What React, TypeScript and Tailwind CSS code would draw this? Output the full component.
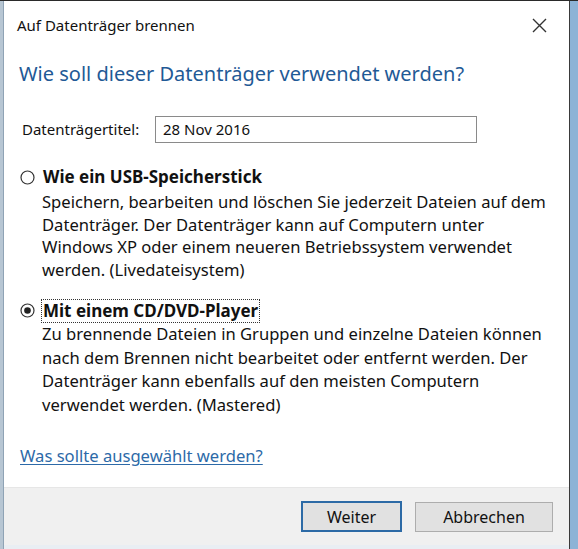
import React from "react";

const font = { fontFamily: '"Noto Sans", "Open Sans", sans-serif' };

function Radio({ checked }: { checked: boolean }) {
  return (
    <svg width="15" height="15" viewBox="0 0 15 15" className="shrink-0">
      <circle cx="7.5" cy="7.5" r="6.5" fill="white" stroke="#333" strokeWidth="1.2" />
      {checked && <circle cx="7.5" cy="7.5" r="3.3" fill="#222" />}
    </svg>
  );
}

export default function App() {
  return (
    <div className="w-[578px] h-[549px] bg-[#2a2a2a] overflow-hidden" style={font}>
      <div className="flex h-full pt-[1px]">
        <div className="w-[4px] bg-[#b7c6d3] border-r border-[#8fa3b5]" />
        <div className="w-[565px] flex flex-col bg-white">
          {/* title bar */}
          <div className="h-[48px] flex items-center justify-between pl-[13px] pr-[22px] text-[15px] text-[#111]">
            <span>Auf Datenträger brennen</span>
            <svg width="15" height="15" viewBox="0 0 15 15">
              <path d="M1 1 L14 14 M14 1 L1 14" stroke="#333" strokeWidth="1.4" />
            </svg>
          </div>
          <div className="flex-1 flex flex-col px-[15px]">
            <div className="mt-[10px] text-[20px] leading-[30px] text-[#1f5a96]">
              Wie soll dieser Datenträger verwendet werden?
            </div>
            <div className="mt-[27px] flex items-center pl-[3px] text-[15px] text-[#111]">
              <span className="w-[133px]">Datenträgertitel:</span>
              <div className="w-[322px] h-[27px] border border-[#8a8a8a] flex items-center px-[7px]">
                28 Nov 2016
              </div>
            </div>

            <div className="mt-[23px] flex items-center gap-[7px] pl-[1px]">
              <Radio checked={false} />
              <span className="text-[17px] font-bold text-[#111] leading-[22px] px-[1px]">
                Wie ein USB-Speicherstick
              </span>
            </div>
            <div className="mt-[3px] pl-[23px] text-[16.6px] leading-[22.7px] text-[#111] whitespace-nowrap">
              <div>Speichern, bearbeiten und löschen Sie jederzeit Dateien auf dem</div>
              <div>Datenträger. Der Datenträger kann auf Computern unter</div>
              <div>Windows XP oder einem neueren Betriebssystem verwendet</div>
              <div>werden. (Livedateisystem)</div>
            </div>

            <div className="mt-[18px] flex items-center gap-[7px] pl-[1px]">
              <Radio checked={true} />
              <span className="text-[17px] font-bold text-[#111] leading-[22px] px-[1px] outline outline-1 outline-dotted outline-[#333]">
                Mit einem CD/DVD-Player
              </span>
            </div>
            <div className="pl-[23px] text-[16.6px] leading-[23.7px] text-[#111] whitespace-nowrap">
              <div>Zu brennende Dateien in Gruppen und einzelne Dateien können</div>
              <div>nach dem Brennen nicht bearbeitet oder entfernt werden. Der</div>
              <div>Datenträger kann ebenfalls auf den meisten Computern</div>
              <div>verwendet werden. (Mastered)</div>
            </div>

            <div className="mt-[28px] pl-[1px] text-[16.6px] leading-[22px]">
              <span className="text-[#2d6aa8] underline underline-offset-2">Was sollte ausgewählt werden?</span>
            </div>
          </div>
          {/* footer */}
          <div className="h-[58px] bg-[#f0f0f0] border-t border-[#e6e6e6] flex items-center justify-end gap-[13px] pr-[16px] text-[16px] text-[#111]">
            <button className="w-[101px] h-[31px] bg-[#e1e1e1] border-2 border-[#2c6aa6] flex items-center justify-center">
              Weiter
            </button>
            <button className="w-[138px] h-[30px] bg-[#e1e1e1] border border-[#adadad] flex items-center justify-center">
              Abbrechen
            </button>
          </div>
          <div className="h-[4px] bg-[#e9eef3]" />
        </div>
        <div className="w-[1px] bg-[#3a3a3a]" />
        <div className="w-[8px] bg-[#8db3d6]" />
      </div>
    </div>
  );
}
